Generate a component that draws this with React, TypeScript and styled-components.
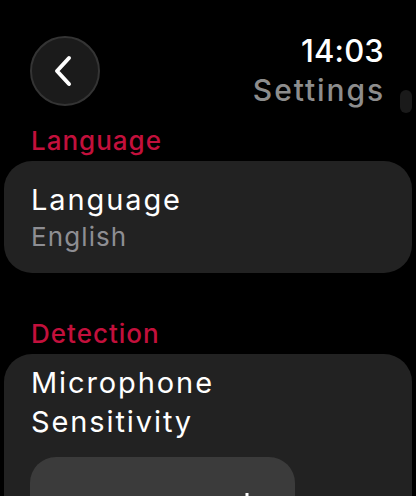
import React from 'react'
import styled, { createGlobalStyle } from 'styled-components'

const GlobalStyle = createGlobalStyle`
  html, body {
    margin: 0;
    padding: 0;
    background: #000;
    overflow: hidden;
  }
  body {
    font-family: Inter, 'Noto Sans', sans-serif;
    color: #fff;
    -webkit-font-smoothing: antialiased;
  }
`

const Screen = styled.div`
  position: relative;
  width: 416px;
  height: 496px;
  overflow: hidden;
  background: #000;
`

const Header = styled.header`
  display: flex;
  justify-content: space-between;
  align-items: flex-start;
  padding: 34px 32px 0 30px;
`

const BackButton = styled.button`
  width: 70px;
  height: 70px;
  margin-top: 2px;
  border-radius: 50%;
  border: 2px solid #343434;
  background: #1b1b1b;
  display: flex;
  align-items: center;
  justify-content: center;
  padding: 0 5px 0 0;
  cursor: pointer;
`

const TitleBlock = styled.div`
  display: flex;
  flex-direction: column;
  align-items: flex-end;
`

const Clock = styled.div`
  font-size: 31px;
  line-height: 34px;
  font-weight: 500;
  letter-spacing: 0.2px;
  color: #fff;
`

const PageTitle = styled.div`
  margin-top: 4px;
  margin-right: -1px;
  font-size: 30px;
  line-height: 36px;
  font-weight: 500;
  letter-spacing: 1.9px;
  color: #8d8d8d;
`

const ScrollIndicator = styled.div`
  position: absolute;
  top: 90px;
  right: 4px;
  width: 12px;
  height: 23px;
  border-radius: 6px;
  background: #1a1a1a;
`

const Content = styled.main`
  display: flex;
  flex-direction: column;
  padding: 17px 4px 0;
`

const SectionTitle = styled.h2<{ $gap?: number }>`
  margin: ${({ $gap }) => $gap ?? 0}px 0 3.5px;
  padding-left: 27px;
  font-size: 26px;
  line-height: 32px;
  font-weight: 500;
  letter-spacing: 1px;
  color: #c3103c;
`

const Card = styled.section<{ $pad: string }>`
  background: #222222;
  border-radius: 28px;
  padding: ${({ $pad }) => $pad};
  display: flex;
  flex-direction: column;
`

const RowTitle = styled.div<{ $lh?: number }>`
  font-size: 29px;
  line-height: ${({ $lh }) => $lh ?? 36}px;
  font-weight: 400;
  letter-spacing: 1.9px;
  color: #fff;
`

const RowValue = styled.div`
  margin-top: 3px;
  font-size: 26px;
  line-height: 32px;
  letter-spacing: 1.1px;
  color: #8e8e93;
`

const Stepper = styled.div`
  margin: 16px 0 0 -1px;
  width: 265px;
  height: 90px;
  border-radius: 26px;
  background: #3b3b3b;
  display: flex;
  align-items: flex-start;
  justify-content: space-between;
  padding: 36px 36px 0;
  box-sizing: border-box;
`

const ChevronLeft = () => (
  <svg width="24" height="32" viewBox="0 0 24 32" fill="none">
    <path
      d="M18 3 L6 16 L18 29"
      stroke="#fff"
      strokeWidth="4"
      strokeLinecap="round"
      strokeLinejoin="round"
    />
  </svg>
)

const MinusIcon = () => (
  <svg width="24" height="24" viewBox="0 0 24 24" fill="none">
    <path d="M1 12 H23" stroke="#fff" strokeWidth="3" />
  </svg>
)

const PlusIcon = () => (
  <svg width="24" height="24" viewBox="0 0 24 24" fill="none">
    <path d="M12 0 V24 M0 12 H24" stroke="#fff" strokeWidth="3" />
  </svg>
)

export default function App() {
  return (
    <>
      <GlobalStyle />
      <Screen>
        <Header>
          <BackButton aria-label="Back">
            <ChevronLeft />
          </BackButton>
          <TitleBlock>
            <Clock>14:03</Clock>
            <PageTitle>Settings</PageTitle>
          </TitleBlock>
        </Header>
        <ScrollIndicator />
        <Content>
          <SectionTitle>Language</SectionTitle>
          <Card $pad="21.5px 27px 19.5px">
            <RowTitle>Language</RowTitle>
            <RowValue>English</RowValue>
          </Card>
          <SectionTitle $gap={45.5}>Detection</SectionTitle>
          <Card $pad="9px 27px 20px">
            <RowTitle $lh={39}>
              Microphone
              <br />
              Sensitivity
            </RowTitle>
            <Stepper>
              <MinusIcon />
              <PlusIcon />
            </Stepper>
          </Card>
        </Content>
      </Screen>
    </>
  )
}
